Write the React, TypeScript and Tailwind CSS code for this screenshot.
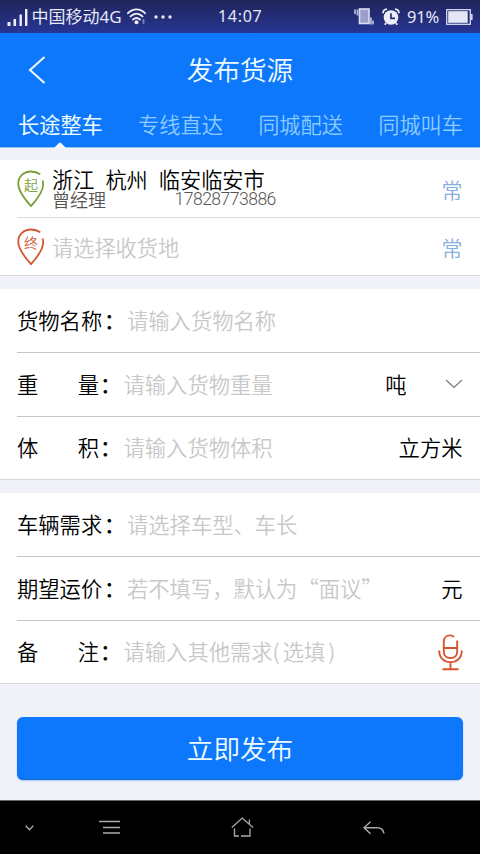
import type { ReactNode } from "react";

const tabs = ["长途整车", "专线直达", "同城配送", "同城叫车"];

function StatusBar() {
  return (
    <div className="flex h-[33px] items-center bg-linear-to-b from-[#20255a] to-[#273593] text-[16.5px] leading-[33px] text-[#e6e8f8]">
      <svg className="ml-[7px] mt-[1px] h-[17px] w-[21px] shrink-0" viewBox="0 0 21 17" fill="#eceefa">
        <rect x="0.5" y="13" width="3" height="4" />
        <rect x="6.5" y="10" width="2.6" height="7" />
        <rect x="12.5" y="5.5" width="2.4" height="11.5" />
        <rect x="18" y="0" width="2.4" height="17" />
      </svg>
      <span className="ml-[3.5px] w-[92.5px] -translate-y-[1px] whitespace-nowrap text-[17px]">
        中国移动<span className="font-['Noto_Sans'] text-[17px]">4G</span>
      </span>
      <svg className="ml-[3px] h-[17px] w-[19px] shrink-0" viewBox="0 0 19 17" fill="none" stroke="#eceefa" strokeWidth="1.9" strokeLinecap="round">
        <path d="M1 5.2C6 .1 13 .1 18 5.2M3.5 8.4C7.2 4.8 11.8 4.8 15.5 8.4M6 11.4c2.2-1.8 4.8-1.8 7 0" />
        <circle cx="9.5" cy="14.2" r="2" fill="#eceefa" stroke="none" />
        <path d="M16.5 12v3" stroke="#7b83bd" />
      </svg>
      <svg className="ml-[8px] h-[4px] w-[18px] shrink-0" viewBox="0 0 18 4" fill="#e6e8f8">
        <circle cx="2" cy="2" r="1.7" />
        <circle cx="9" cy="2" r="1.7" />
        <circle cx="16" cy="2" r="1.7" />
      </svg>
      <span className="ml-[46px] w-[45px] font-['Noto_Sans'] text-[16px] tracking-[0.7px]">14:07</span>
      <svg className="ml-[91px] h-[17px] w-[20px] shrink-0" viewBox="0 0 20 17">
        <rect x="5.5" y="1" width="9.5" height="14.5" fill="#9a9fca" stroke="#dcdff2" strokeWidth="1.6" />
        <path d="M1 1.5v4.5M3.5 1.5v6M16.9 9.5v7M19 12.5v4" stroke="#b9bee0" strokeWidth="1.7" />
      </svg>
      <svg className="ml-[8px] h-[18px] w-[18px] shrink-0" viewBox="0 0 18 18" fill="none" stroke="#eceefa">
        <circle cx="9" cy="9.5" r="7.3" fill="#eceefa" stroke="none" />
        <path d="M1 5.2C1.2 2.8 2.8 1.3 5 1.2M17 5.2C16.8 2.8 15.2 1.3 13 1.2M4 15l-1.2 1.8M14 15l1.2 1.8" strokeWidth="1.8" />
        <path d="M9 5.3v5h4" stroke="#262d72" strokeWidth="1.7" />
      </svg>
      <span className="ml-[7px] w-[33px] font-['Noto_Sans'] text-[16.5px] tracking-[-0.2px]">91%</span>
      <svg className="ml-[6px] h-[16px] w-[27px] shrink-0" viewBox="0 0 27 16">
        <rect x="0.7" y="0.7" width="23.6" height="14.6" fill="none" stroke="#d6d9ee" strokeWidth="1.3" />
        <rect x="2.2" y="2.2" width="19.5" height="11.6" fill="#e4e6f5" />
        <rect x="24.8" y="5" width="1.8" height="6" fill="#d6d9ee" />
      </svg>
    </div>
  );
}

function Header() {
  return (
    <header className="h-[115px] border-b border-[#8fc4fb] bg-[#0e78fd]">
      <div className="grid h-[73px] grid-cols-[1fr_auto_1fr] items-center">
        <svg className="ml-[28px] h-[28px] w-[18px]" viewBox="0 0 18 28" fill="none" stroke="#f0fcff" strokeWidth="2">
          <path d="M16.5 1L2 14l14.5 13" />
        </svg>
        <h1 className="-translate-y-[1px] text-[26.6px] leading-[73px] font-[350] text-[#effcff]">发布货源</h1>
      </div>
      <nav className="flex h-[41px] justify-between pr-[17px] pl-[18px] text-[21.2px] leading-[36px]">
        {tabs.map((tab, i) => (
          <div key={tab} className={i === 0 ? "relative font-normal text-[#effcff]" : "font-[350] text-[#8dccff]"}>
            {tab}
            {i === 0 && (
              <svg className="absolute bottom-[-1px] left-[36px] h-[6px] w-[12px]" viewBox="0 0 12 6" fill="#f1f7fd">
                <path d="M0 6L5 1Q6 0 7 1l5 5z" />
              </svg>
            )}
          </div>
        ))}
      </nav>
    </header>
  );
}

function Pin({ char, tone }: { char: string; tone: string }) {
  return (
    <div className={`relative h-[38px] w-[28px] shrink-0 text-center text-[14px] leading-[28px] font-[350] ${tone}`}>
      <svg className="absolute inset-0 h-[38px] w-[28px]" viewBox="0 0 28 38" fill="none" stroke="currentColor" strokeWidth="1.8" strokeLinejoin="round">
        <path d="M23.2 4.2C20 2 17 1.5 14 1.5C7 1.5 1.2 6.2 1.2 13.8C1.2 21 8 29.5 14 36.2C20 29.5 26 21 26.2 14.5C26.2 12.8 25.9 11.6 25.5 10.5" />
      </svg>
      {char}
    </div>
  );
}

function Common() {
  return <span className="ml-auto text-[21px] leading-[30px] font-[350] text-[#86aee0]">常</span>;
}

function Field({ label, hint, last, children }: { label: string; hint: ReactNode; last?: boolean; children?: ReactNode }) {
  const short = label.length === 2;
  return (
    <div className={last ? "border-b border-[#d5d6da] pl-[17px]" : "pl-[17px]"}>
      <div
        className={`flex items-center pr-[17.5px] pb-[2px] text-[21.3px] whitespace-nowrap ${last ? "h-[62px]" : "h-[64px] border-b border-[#c5c5c5]"}`}
      >
        <div className={short ? "flex w-[106.5px] shrink-0 font-[350] text-black" : "flex w-[110px] shrink-0 font-[350] text-black"}>
          <span className={short ? "flex w-[82px] justify-between" : "w-[85px]"}>
            {short ? label.split("").map((c) => <span key={c}>{c}</span>) : label}
          </span>
          <span className={short ? "ml-[1px] font-medium" : "ml-[2px] font-medium"}>：</span>
        </div>
        <span className="font-[350] text-[#c8c8c8]">{hint}</span>
        {children}
      </div>
    </div>
  );
}

function Microphone() {
  return (
    <svg className="ml-auto h-[37px] w-[25px] translate-y-[1px]" viewBox="0 0 25 37" fill="none" stroke="#d4552f" strokeWidth="1.9">
      <path d="M16 3C14.9 1.8 13.7 1.4 12 1.4C8.3 1.4 5.8 4 5.8 7.6V17.5C5.8 21.6 8.6 24 12.4 24S19.2 21.6 19.2 17.5V6.5M5.8 14H19.2" />
      <path d="M1.2 16.5C1.2 24 6 28.2 12.5 28.2S23.8 24 23.8 16.5M12.5 28.2V35M4.5 35.3H20.5" />
    </svg>
  );
}

function NavigationBar() {
  return (
    <div className="flex h-[54px] items-center border-t border-[#66686b] bg-black text-[#aaa]">
      <svg className="ml-[25px] h-[6px] w-[9px]" viewBox="0 0 9 6" fill="none" stroke="currentColor" strokeWidth="1.3">
        <path d="M.7.7L4.5 4.7 8.3.7" />
      </svg>
      <svg className="ml-[65px] h-[15px] w-[21px]" viewBox="0 0 21 15" fill="none" stroke="currentColor" strokeWidth="1.3">
        <path d="M0 1.5H21M4 7.5H21M4 13H21" />
      </svg>
      <svg className="ml-[111px] h-[20px] w-[23px] -translate-y-[1px]" viewBox="0 0 23 20" fill="none" stroke="currentColor" strokeWidth="1.3">
        <path d="M.8 10.5L11.2 1 22 10.5M18.4 7V2.5M3.5 11.5V19H8M10 19H19V11.5" />
      </svg>
      <svg className="ml-[109px] h-[14px] w-[22px]" viewBox="0 0 22 14" fill="none" stroke="currentColor" strokeWidth="1.4">
        <path d="M7.5 .8L1 6.7L7.5 12.8M1 6.7H14Q20 6.7 21 12.5" />
      </svg>
    </div>
  );
}

export default function App() {
  return (
    <div className="flex h-[854px] w-[480px] flex-col overflow-hidden bg-[#f1f2f7] font-['Noto_Sans_CJK_SC',sans-serif]">
      <StatusBar />
      <Header />
      <main className="flex flex-1 flex-col">
        <section className="mt-[12px] h-[116px] border-b border-[#d5d6da] bg-white pl-[17px]">
          <div className="flex h-[58px] items-center border-b border-[#dcdcdc] pr-[17.5px]">
            <Pin char="起" tone="text-[#7b9f37]" />
            <div className="ml-[7px] whitespace-nowrap">
              <div className="flex gap-[11px] text-[21.2px] leading-[21px] font-[350] text-black">
                <span>浙江</span>
                <span>杭州</span>
                <span>临安临安市</span>
              </div>
              <div className="flex text-[18px] leading-[21px] font-[350] text-[#555]">
                <span className="w-[122.5px]">曾经理</span>
                <span className="font-['Roboto'] text-[17.6px] tracking-[-0.55px]">17828773886</span>
              </div>
            </div>
            <Common />
          </div>
          <div className="flex h-[57px] items-center pr-[17.5px]">
            <Pin char="终" tone="text-[#d4552f]" />
            <span className="ml-[7px] text-[21.2px] font-[350] text-[#c8c8c8]">请选择收货地</span>
            <Common />
          </div>
        </section>
        <section className="mt-[13px] bg-white">
          <Field label="货物名称" hint="请输入货物名称" />
          <Field label="重量" hint="请输入货物重量">
            <span className="ml-auto font-[350] text-black">吨</span>
            <svg className="ml-[38px] h-[10px] w-[18px]" viewBox="0 0 18 10" fill="none" stroke="#777" strokeWidth="1.1">
              <path d="M1 1L9 8.5 17 1" />
            </svg>
          </Field>
          <Field label="体积" hint="请输入货物体积" last>
            <span className="ml-auto font-[350] text-black">立方米</span>
          </Field>
        </section>
        <section className="mt-[13px] bg-white">
          <Field label="车辆需求" hint="请选择车型、车长" />
          <Field label="期望运价" hint="若不填写，默认为“面议”">
            <span className="ml-auto font-[350] text-black">元</span>
          </Field>
          <Field
            label="备注"
            hint={
              <>
                请输入其他需求<span className="tracking-[3px]">(</span>选填<span className="ml-[3px]">)</span>
              </>
            }
            last
          >
            <Microphone />
          </Field>
        </section>
        <button className="mx-[17px] mt-[33px] h-[63px] rounded-[6px] border-b border-[#1768d2] bg-[#0e78fd] text-[26.6px] font-[350] text-[#effcff] shadow-[0_1px_2px_#a9c9f5]">
          立即发布
        </button>
      </main>
      <NavigationBar />
    </div>
  );
}
